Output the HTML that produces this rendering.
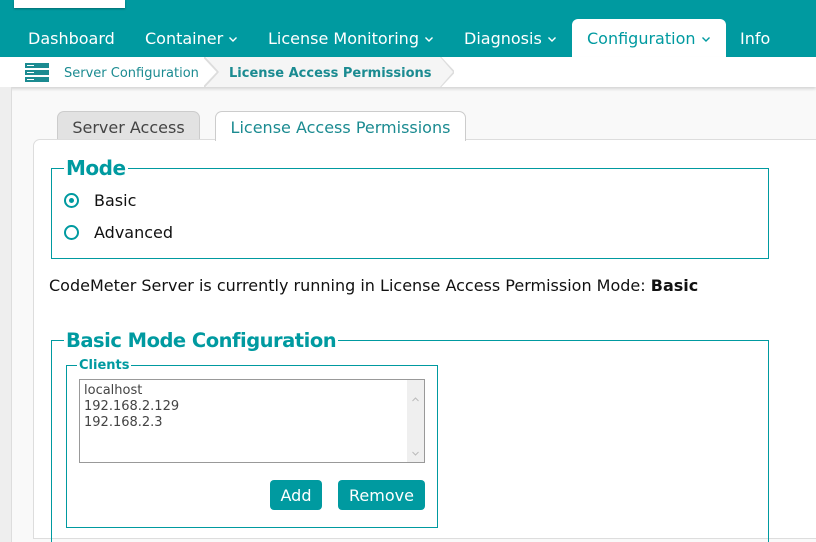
<!DOCTYPE html>
<html><head><meta charset="utf-8"><style>
*{box-sizing:border-box;margin:0;padding:0}
html,body{width:816px;height:542px;overflow:hidden}
body{background:#f9f9f9;font-family:"DejaVu Sans","Liberation Sans",sans-serif;position:relative;color:#111}
.hdr{position:absolute;left:0;top:0;width:816px;height:57px;background:#009aa0}
.logo{position:absolute;left:14px;top:0;width:111px;height:8px;background:#fff;box-shadow:0 1px 2px rgba(0,0,0,.3)}
.nav{position:absolute;top:29px;font-size:16px;color:#fff;white-space:nowrap}
.car{margin-left:6px;vertical-align:middle}
.act{position:absolute;left:572px;top:19px;width:154px;height:42px;background:#fff;border-radius:6px 6px 0 0}
.bc{position:absolute;left:0;top:57px;width:816px;height:30px;background:#fff;box-shadow:0 2px 3px rgba(0,0,0,.15)}
.strip{position:absolute;left:0;top:87px;width:12px;height:455px;background:#eee;border-right:1px solid #ddd}
.tab{position:absolute;top:111px;height:29px;border:1px solid #ccc;border-bottom:none;border-radius:7px 7px 0 0;font-size:16px;text-align:center;line-height:32px}
.panel{position:absolute;left:33px;top:139px;width:790px;height:400px;background:#fff;border:1px solid #ddd;border-radius:7px 0 0 0}
fieldset{position:absolute;border:1px solid #009aa0}
legend{color:#009aa0;font-weight:bold;padding:0 2px;margin-left:12px}
.rad{position:absolute;left:64px;width:15px;height:15px;border:2px solid #009aa0;border-radius:50%}
.lbl{position:absolute;left:94px;font-size:16px}
.btn{position:absolute;top:480px;height:30px;background:#009aa0;color:#fff;border-radius:4px;font-size:16px;text-align:center;line-height:31px}
</style></head><body>
<div class="hdr"><div class="logo"></div>
<div class="act"></div>
<div class="nav" style="left:28px">Dashboard</div>
<div class="nav" style="left:145px">Container<svg class="car" width="8" height="5"><path d="M0.5 0.5L4 4L7.5 0.5" fill="none" stroke="#fff" stroke-width="1.4"/></svg></div>
<div class="nav" style="left:268px">License Monitoring<svg class="car" width="8" height="5"><path d="M0.5 0.5L4 4L7.5 0.5" fill="none" stroke="#fff" stroke-width="1.4"/></svg></div>
<div class="nav" style="left:464px">Diagnosis<svg class="car" width="8" height="5"><path d="M0.5 0.5L4 4L7.5 0.5" fill="none" stroke="#fff" stroke-width="1.4"/></svg></div>
<div class="nav" style="left:587px;color:#009aa0">Configuration<svg class="car" width="8" height="5"><path d="M0.5 0.5L4 4L7.5 0.5" fill="none" stroke="#009aa0" stroke-width="1.4"/></svg></div>
<div class="nav" style="left:740px">Info</div>
</div>
<div class="bc">
<svg style="position:absolute;left:25px;top:6px" width="24" height="19"><rect x="0" y="0" width="24" height="5" fill="#1b8b91"/><rect x="0" y="7" width="24" height="5" fill="#1b8b91"/><rect x="0" y="14" width="24" height="5" fill="#1b8b91"/><rect x="2" y="2" width="7" height="1" fill="#fff"/><rect x="2" y="9" width="7" height="1" fill="#fff"/><rect x="2" y="16" width="7" height="1" fill="#fff"/></svg>
<div style="position:absolute;left:64px;top:9px;font-size:13px;color:#1b8b91">Server Configuration</div>
<svg style="position:absolute;left:204px;top:0" width="250" height="30"><path d="M0 0 L14 15 L0 30" fill="none" stroke="#ddd" stroke-width="2"/><path d="M236 0 L250 15 L236 30" fill="none" stroke="#ddd" stroke-width="2"/><path d="M2 0 H236 L249 15 L236 30 H2 L15 15Z" fill="#f5f5f5"/></svg>
<div style="position:absolute;left:229px;top:9px;font-size:13px;font-weight:bold;color:#1b8b91">License Access Permissions</div>
</div>
<div class="strip"></div>
<div class="tab" style="left:57px;width:143px;background:#e2e2e2;color:#444">Server Access</div>
<div class="panel"></div>
<div class="tab" style="left:215px;width:251px;height:30px;background:#fff;color:#1b8b91;z-index:2">License Access Permissions</div>
<fieldset style="left:51px;top:156px;width:718px;height:103px"><legend style="font-size:20px;letter-spacing:-0.5px">Mode</legend></fieldset>
<div class="rad" style="top:193px"><div style="width:5px;height:5px;background:#009aa0;border-radius:50%;margin:3px"></div></div>
<div class="lbl" style="top:191px">Basic</div>
<div class="rad" style="top:225px"></div>
<div class="lbl" style="top:223px">Advanced</div>
<div style="position:absolute;left:49px;top:276px;font-size:16px">CodeMeter Server is currently running in License Access Permission Mode: <b>Basic</b></div>
<fieldset style="left:51px;top:329px;width:718px;height:230px"><legend style="font-size:19.5px;letter-spacing:-0.5px">Basic Mode Configuration</legend></fieldset>
<fieldset style="left:66px;top:358px;width:372px;height:170px"><legend style="font-size:13px;margin-left:10px">Clients</legend></fieldset>
<div style="position:absolute;left:79px;top:379px;width:346px;height:84px;border:1px solid #999;background:#fff;font-size:13px;color:#444;line-height:16px;padding:3px 4px">localhost<br>192.168.2.129<br>192.168.2.3
<div style="position:absolute;right:0;top:0;width:17px;height:82px;background:#efefef">
<svg width="17" height="82"><path d="M5.5 21L8.5 18L11.5 21" fill="none" stroke="#bbb"/><path d="M5.5 72L8.5 75L11.5 72" fill="none" stroke="#bbb"/></svg></div></div>
<div class="btn" style="left:270px;width:52px">Add</div>
<div class="btn" style="left:338px;width:87px">Remove</div>
</body></html>
